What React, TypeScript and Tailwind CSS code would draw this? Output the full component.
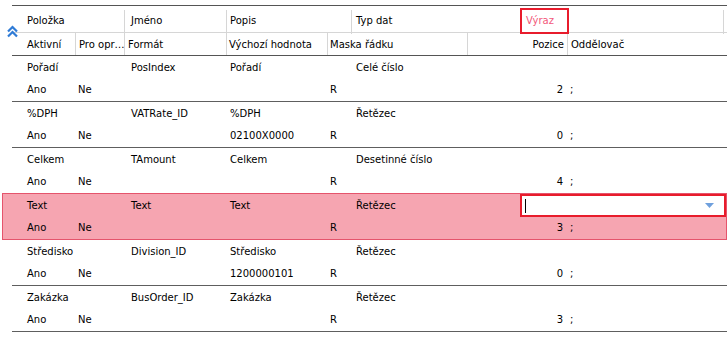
import React from 'react';

type Rec = {
  item: string;
  name: string;
  desc: string;
  type: string;
  def: string;
  pos: string;
  active?: boolean;
};

const RECORDS: Rec[] = [
  { item: 'Pořadí', name: 'PosIndex', desc: 'Pořadí', type: 'Celé číslo', def: '', pos: '2' },
  { item: '%DPH', name: 'VATRate_ID', desc: '%DPH', type: 'Řetězec', def: '02100X0000', pos: '0' },
  { item: 'Celkem', name: 'TAmount', desc: 'Celkem', type: 'Desetinné číslo', def: '', pos: '4' },
  { item: 'Text', name: 'Text', desc: 'Text', type: 'Řetězec', def: '', pos: '3', active: true },
  { item: 'Středisko', name: 'Division_ID', desc: 'Středisko', type: 'Řetězec', def: '1200000101', pos: '0' },
  { item: 'Zakázka', name: 'BusOrder_ID', desc: 'Zakázka', type: 'Řetězec', def: '', pos: '3' },
];

const row1Cols = 'grid grid-cols-[112px_102px_125px_169px_203px_1fr]';
const row2Cols = 'grid grid-cols-[63px_49px_102px_101px_140px_100px_1fr]';
const sep = 'border-l border-[#d6d6d6]';

function CollapseIcon() {
  return (
    <svg width="11" height="13" viewBox="0 0 11 13" className="absolute left-[7px] top-[25px]">
      <path d="M1 6.5 L5.5 2 L10 6.5" fill="none" stroke="#2f7bd6" strokeWidth="2.2" />
      <path d="M1 11.5 L5.5 7 L10 11.5" fill="none" stroke="#2f7bd6" strokeWidth="2.2" />
    </svg>
  );
}

function Header() {
  return (
    <div className="ml-[12px] border-t border-[#555]">
      <div className={`${row1Cols} h-[27px] border-b border-[#d6d6d6]`}>
        <div className="pl-[15px] pt-[10px]">Položka</div>
        <div className={`${sep} mt-[4px] pl-[6px] pt-[6px]`}>Jméno</div>
        <div className={`${sep} mt-[4px] pl-[3px] pt-[6px]`}>Popis</div>
        <div className={`${sep} mt-[4px] pl-[4px] pt-[6px]`}>Typ dat</div>
        <div className="relative z-10">
          <div className="mt-[2px] h-[26px] w-[49px] border-2 border-[#e81c2c] pl-[4px] pt-[6px] text-[#f2587a]">
            Výraz
          </div>
        </div>
        <div className={`${sep} mt-[4px]`} />
      </div>
      <div className={`${row2Cols} h-[23px] border-b border-[#555] items-stretch`}>
        <div className="flex items-center pl-[15px] pt-[2px]">Aktivní</div>
        <div className={`${sep} flex items-center pl-[3px] pt-[2px] whitespace-nowrap overflow-hidden`}>Pro opr…</div>
        <div className={`${sep} flex items-center pl-[3px] pt-[2px]`}>Formát</div>
        <div className={`${sep} flex items-center pl-[2px] pt-[2px]`}>Výchozí hodnota</div>
        <div className={`${sep} flex items-center pl-[2px] pt-[2px]`}>Maska řádku</div>
        <div className={`${sep} flex items-center justify-end pr-[3px] pt-[2px]`}>Pozice</div>
        <div className={`${sep} flex items-center pl-[3px] pt-[2px]`}>Oddělovač</div>
      </div>
    </div>
  );
}

function Record({ r }: { r: Rec }) {
  const wrap = r.active
    ? '-mt-px ml-[2px] h-[47px] border border-[#e5546c] bg-[#f6a5b1] pl-[9px]'
    : 'ml-[12px] h-[46px] border-b border-[#5e5e5e]';
  return (
    <div className={wrap}>
      <div className={`${row1Cols} h-[23px] items-center`}>
        <div className="pl-[15px]">{r.item}</div>
        <div className="pl-[7px]">{r.name}</div>
        <div className="pl-[4px]">{r.desc}</div>
        <div className="pl-[5px]">{r.type}</div>
        {r.active ? (
          <div className="col-span-2 flex h-[23px] items-center border-2 border-[#e81c2c] bg-white pl-[3px] pr-[10px]">
            <span className="h-[14px] w-px bg-black" />
            <svg width="9" height="5" viewBox="0 0 9 5" className="ml-auto">
              <path d="M0 0 H9 L4.5 5 Z" fill="#6fa0dd" />
            </svg>
          </div>
        ) : (
          <div className="col-span-2" />
        )}
      </div>
      <div className={`${row2Cols} h-[22px] items-center`}>
        <div className="pl-[15px]">Ano</div>
        <div className="pl-[3px]">Ne</div>
        <div />
        <div className="pl-[4px]">{r.def}</div>
        <div className="pl-[3px]">R</div>
        <div className="pr-[4px] text-right">{r.pos}</div>
        <div className="pl-[3px]">;</div>
      </div>
    </div>
  );
}

export default function App() {
  return (
    <div
      className="relative h-[338px] w-[727px] overflow-hidden bg-white pt-[5px] text-[10px] leading-none text-black"
      style={{ fontFamily: '"DejaVu Sans", Verdana, sans-serif' }}
    >
      <CollapseIcon />
      <Header />
      {RECORDS.map((r) => (
        <Record key={r.item + r.name} r={r} />
      ))}
    </div>
  );
}
